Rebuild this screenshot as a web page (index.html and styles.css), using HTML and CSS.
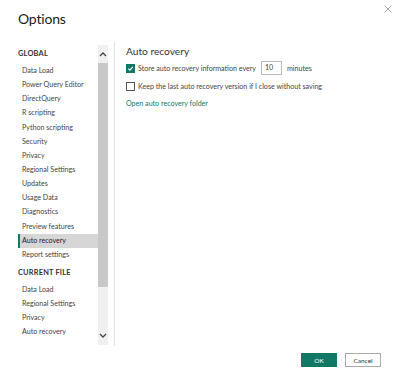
FILE: index.html
```html
<!DOCTYPE html>
<html lang="en">
<head>
    <meta charset="UTF-8">
    <title>Options</title>
    <link rel="stylesheet" href="styles.css">
</head>
<body>
    <div class="dialog">
        <div class="title-row">
            <h1>Options</h1>
            <span class="close">
                <svg width="8" height="8" viewBox="0 0 8 8"><path d="M0.5 0.5 L7.5 7.5 M7.5 0.5 L0.5 7.5" stroke="#999" stroke-width="0.9"/></svg>
            </span>
        </div>

        <div class="main">
            <div class="nav">
                <div class="nav-head">GLOBAL</div>
                <div class="nav-item">Data Load</div>
                <div class="nav-item">Power Query Editor</div>
                <div class="nav-item">DirectQuery</div>
                <div class="nav-item">R scripting</div>
                <div class="nav-item">Python scripting</div>
                <div class="nav-item">Security</div>
                <div class="nav-item">Privacy</div>
                <div class="nav-item">Regional Settings</div>
                <div class="nav-item">Updates</div>
                <div class="nav-item">Usage Data</div>
                <div class="nav-item">Diagnostics</div>
                <div class="nav-item">Preview features</div>
                <div class="nav-item selected">Auto recovery</div>
                <div class="nav-item">Report settings</div>
                <div class="nav-head second">CURRENT FILE</div>
                <div class="nav-item">Data Load</div>
                <div class="nav-item">Regional Settings</div>
                <div class="nav-item">Privacy</div>
                <div class="nav-item">Auto recovery</div>
            </div>

            <div class="scrollbar">
                <div class="arrow">
                    <svg width="8" height="6" viewBox="0 0 8 6"><path d="M1 5 L4 2 L7 5" fill="none" stroke="#444" stroke-width="1.3"/></svg>
                </div>
                <div class="thumb"></div>
                <div class="track"></div>
                <div class="arrow">
                    <svg width="8" height="6" viewBox="0 0 8 6"><path d="M1 1 L4 4 L7 1" fill="none" stroke="#444" stroke-width="1.3"/></svg>
                </div>
            </div>

            <div class="content">
                <h2>Auto recovery</h2>
                <div class="option">
                    <span class="check on">
                        <svg width="7" height="7" viewBox="0 0 7 7"><path d="M1.3 3.6 L2.9 5.1 L5.8 1.8" fill="none" stroke="#fff" stroke-width="1.2"/></svg>
                    </span>
                    <span>Store auto recovery information every</span>
                    <span class="num">10</span>
                    <span>minutes</span>
                </div>
                <div class="option">
                    <span class="check"></span>
                    <span>Keep the last auto recovery version if I close without saving</span>
                </div>
                <a class="link">Open auto recovery folder</a>
            </div>
        </div>

        <div class="footer">
            <button class="btn primary">OK</button>
            <button class="btn">Cancel</button>
        </div>
    </div>
</body>
</html>
```

FILE: styles.css
```css
body {
    margin: 0;
    background-color: #fff;
    font-family: Lato, "Noto Sans", sans-serif;
    color: #333;
}

.dialog {
    width: 400px;
    height: 385px;
}

.title-row {
    display: flex;
    justify-content: space-between;
    align-items: flex-start;
    padding: 9px 8px 0 18px;
    height: 33px;
}

h1 {
    margin: 0;
    font-size: 14px;
    font-weight: 400;
    letter-spacing: -0.2px;
    color: #222;
    line-height: 20px;
}

.close {
    margin-top: -4px;
}

.close svg {
    display: block;
}

.main {
    display: flex;
    height: 304px;
}

.nav {
    width: 80px;
    margin-left: 18px;
    padding-top: 5px;
    font-size: 7.1px;
}

.nav-head {
    font-weight: 700;
    font-size: 7.4px;
    color: #333;
    line-height: 14px;
    height: 14px;
    margin-bottom: 3px;
    letter-spacing: 0.2px;
}

.nav-head.second {
    margin-top: 4px;
}

.nav-item {
    line-height: 14.15px;
    height: 14.15px;
    padding-left: 4px;
    color: #444;
    white-space: nowrap;
}

.nav-item.selected {
    background-color: #d6d6d6;
    border-left: 2px solid #117865;
    padding-left: 2px;
    color: #222;
}

.scrollbar {
    width: 10px;
    margin-top: 3px;
    height: 300px;
    background-color: #f0f0f0;
    display: flex;
    flex-direction: column;
}

.arrow {
    height: 18px;
    display: flex;
    align-items: center;
    justify-content: center;
}

.thumb {
    height: 224px;
    background-color: #c8c8c8;
}

.track {
    flex: 1;
}

.content {
    margin-left: 6px;
    border-left: 1px solid #e3e3e3;
    padding-left: 11px;
    flex: 1;
    font-size: 7.1px;
    color: #444;
}

h2 {
    margin: 0;
    padding-top: 1px;
    font-size: 10.2px;
    font-weight: 400;
    color: #333;
    line-height: 16px;
}

.option {
    display: flex;
    align-items: center;
    gap: 3px;
    height: 18px;
}

.check {
    width: 7px;
    height: 7px;
    border: 1px solid #555;
    display: flex;
    align-items: center;
    justify-content: center;
}

.check.on {
    background-color: #117865;
    border-color: #117865;
}

.num {
    border: 1px solid #bbb;
    width: 16px;
    height: 12px;
    line-height: 12px;
    padding-left: 3px;
    margin: 0 2px;
}

.link {
    display: block;
    margin-top: 1px;
    color: #117865;
    line-height: 16px;
}

.footer {
    display: flex;
    justify-content: flex-end;
    gap: 8px;
    padding: 7px 19px 0 0;
}

.btn {
    width: 36px;
    height: 14px;
    font-family: inherit;
    font-size: 6.5px;
    padding: 0;
    border: 1px solid #aaa;
    background-color: #fff;
    color: #333;
}

.btn.primary {
    background-color: #117865;
    border-color: #117865;
    color: #fff;
}
```
